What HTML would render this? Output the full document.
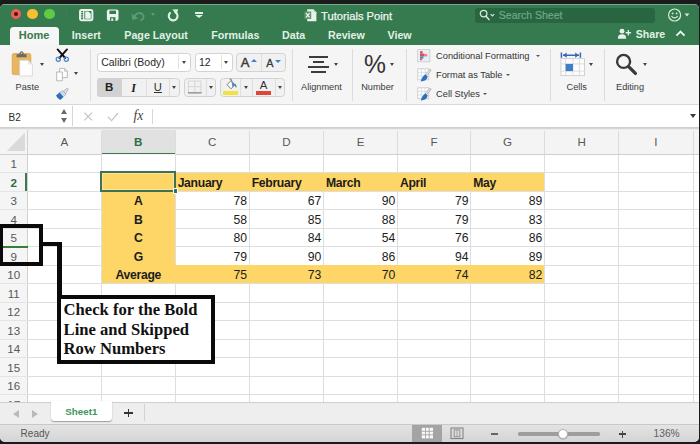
<!DOCTYPE html><html><head><meta charset="utf-8"><title>Tutorials Point</title><style>
html,body{margin:0;padding:0}
body{width:700px;height:444px;overflow:hidden;background:#1b1b1b;position:relative;font-family:"Liberation Sans",sans-serif;}
#win{position:absolute;left:0;top:3.5px;width:699px;height:438.5px;border-radius:5px;overflow:hidden;background:#f3f3f3}
#c{position:absolute;left:0;top:-3.5px;width:700px;height:444px}
.a{position:absolute}
.t{position:absolute;white-space:nowrap;line-height:1}
.tab{color:#e2f0e5;font-weight:bold;font-size:10.7px;top:30.1px}
.lbl{color:#3a3a3a;font-size:9.2px;top:82.5px}
.sep{position:absolute;width:1px;background:#dcdcdc;top:49px;height:52px}
.box{position:absolute;box-sizing:border-box;border:1px solid #d2d2d2;border-radius:3.5px;background:#f1f1f1}
.arr{position:absolute;width:0;height:0;border-left:2.5px solid transparent;border-right:2.5px solid transparent;border-top:3.2px solid #444;margin-left:0.1px}
.hl{position:absolute;left:0;width:699px;height:1px;background:#dedede}
.vl{position:absolute;top:154px;width:1px;height:248px;background:#dedede}
.rn{position:absolute;left:0;width:27.5px;text-align:center;font-size:11.6px;color:#585858;line-height:1}
.cn{position:absolute;top:135.5px;text-align:center;font-size:11.6px;color:#585858;line-height:1}
.cell{position:absolute;font-size:12.2px;color:#1c1c1c;line-height:1;white-space:nowrap}
.num{text-align:right}
.b{font-weight:bold;letter-spacing:-0.3px}
</style></head><body><div id="win"><div id="c">
<div class="a" style="left:0;top:0;width:700px;height:45px;background:#357b4f"></div>
<div class="a" style="left:0;top:3.5px;width:700px;height:1.4px;background:#74a98b"></div>
<div class="a" style="left:10.6px;top:8.6px;width:10.8px;height:10.8px;border-radius:50%;background:#ec5f57"></div>
<div class="a" style="left:14.2px;top:12.2px;width:3.6px;height:3.6px;border-radius:50%;background:#5a0e0c"></div>
<div class="a" style="left:27.4px;top:8.6px;width:10.8px;height:10.8px;border-radius:50%;background:#f6be30"></div>
<div class="a" style="left:44.3px;top:8.6px;width:10.8px;height:10.8px;border-radius:50%;background:#5fcb43"></div>
<div class="a" style="left:66px;top:8px;width:1px;height:13px;background:#3d7d55"></div>
<svg class="a" style="left:78px;top:8px" width="17" height="15" viewBox="0 0 17 15">
<rect x="2" y="2" width="12.4" height="10.2" rx="1.6" fill="none" stroke="#eaf3ec" stroke-width="1.9"/>
<line x1="5.7" y1="2" x2="5.7" y2="12.4" stroke="#eaf3ec" stroke-width="1.3"/>
<path d="M7.2 3.6 H10.6 L12.8 5.8 V10.8 H7.2 Z" fill="#eaf3ec"/>
<rect x="2.8" y="4" width="1.8" height="1" fill="#eaf3ec"/><rect x="2.8" y="6.3" width="1.8" height="1" fill="#eaf3ec"/><rect x="2.8" y="8.6" width="1.8" height="1" fill="#eaf3ec"/>
</svg>
<svg class="a" style="left:105px;top:8px" width="16" height="15" viewBox="0 0 16 15">
<rect x="1.9" y="1.4" width="11.6" height="11.4" rx="1.8" fill="#eaf3ec"/>
<rect x="4.4" y="2.6" width="6.6" height="3.4" fill="#357b4f"/>
<rect x="5" y="9.2" width="5.4" height="3.6" fill="#357b4f"/>
<rect x="6.2" y="10.4" width="2" height="2.4" fill="#eaf3ec"/>
</svg>
<svg class="a" style="left:130px;top:9px" width="17" height="14" viewBox="0 0 17 14">
<path d="M4.2 8.4 C5.4 4.4 9.4 3 12 4.8 C14.6 6.6 13.8 10.2 11 11.2" fill="none" stroke="#5b9b75" stroke-width="1.9" stroke-linecap="round"/>
<path d="M1.6 4.4 L2.2 11 L8.6 9.4 Z" fill="#5b9b75"/>
</svg>
<div class="arr" style="left:150.6px;top:13px;border-top-color:#5b9b75"></div>
<svg class="a" style="left:166px;top:8px" width="15" height="15" viewBox="0 0 15 15">
<path d="M9.4 4.2 A4.4 4.4 0 1 1 4 4.9" fill="none" stroke="#e2efe5" stroke-width="2.1" stroke-linecap="round"/>
<path d="M6.4 1.4 L12.2 1.2 L10.4 6.8 Z" fill="#e2efe5"/>
</svg>
<div class="a" style="left:195.3px;top:12px;width:8px;height:1.5px;background:#e2efe5"></div>
<div class="arr" style="left:195.3px;top:14.6px;border-left-width:4px;border-right-width:4px;border-top:3.5px solid #e2efe5"></div>
<svg class="a" style="left:304px;top:8px" width="14" height="15" viewBox="0 0 14 15">
<path d="M3.2 1.2 H9.4 L12.4 4.2 V13.2 H3.2 Z" fill="#e9f1ea"/>
<path d="M9.4 1.2 V4.2 H12.4 Z" fill="#b9d3c0"/>
<rect x="0.4" y="3.4" width="6.8" height="7.6" fill="#5d9873"/>
<path d="M2 5.2 L5.6 9.4 M5.6 5.2 L2 9.4" stroke="#f2f7f3" stroke-width="1.2"/>
</svg>
<div class="t" style="left:321px;top:11.3px;font-size:11.2px;color:#eef5ef;-webkit-text-stroke:0.25px #eef5ef">Tutorials Point</div>
<div class="a" style="left:475px;top:7.5px;width:179.5px;height:15.5px;border-radius:3px;background:#296540"></div>
<svg class="a" style="left:478px;top:8px" width="20" height="14" viewBox="0 0 20 14">
<circle cx="5.6" cy="5.6" r="3.3" fill="none" stroke="#d6e8da" stroke-width="1.3"/>
<line x1="8" y1="8.2" x2="11" y2="11.6" stroke="#d6e8da" stroke-width="1.5" stroke-linecap="round"/>
<path d="M12.6 6.2 L14.4 8 L16.2 6.2" fill="none" stroke="#d6e8da" stroke-width="1.2"/>
</svg>
<div class="t" style="left:498.8px;top:10.4px;font-size:10.5px;color:#6dab84;-webkit-text-stroke:0.2px #6dab84">Search Sheet</div>
<svg class="a" style="left:666px;top:7px" width="26" height="16" viewBox="0 0 26 16">
<circle cx="8.6" cy="8" r="6" fill="none" stroke="#dcebdf" stroke-width="1.2"/>
<circle cx="6.6" cy="6.4" r="0.9" fill="#dcebdf"/><circle cx="10.6" cy="6.4" r="0.9" fill="#dcebdf"/>
<path d="M5.4 9.2 Q8.6 12.6 11.8 9.2" fill="none" stroke="#dcebdf" stroke-width="1.1"/>
<path d="M18.6 6.6 H23.4 L21 9.6 Z" fill="#dcebdf"/>
</svg>
<div class="a" style="left:9.5px;top:27px;width:49.5px;height:19px;border-radius:3.5px 3.5px 0 0;background:#f6f6f6"></div>
<div class="t" style="left:18.8px;top:30.3px;font-size:11px;font-weight:bold;color:#37784e">Home</div>
<div class="t tab" style="left:71.8px">Insert</div>
<div class="t tab" style="left:124.3px">Page Layout</div>
<div class="t tab" style="left:211.3px">Formulas</div>
<div class="t tab" style="left:282px">Data</div>
<div class="t tab" style="left:328px">Review</div>
<div class="t tab" style="left:387.5px">View</div>
<svg class="a" style="left:616.6px;top:27px" width="15.3" height="13.5" viewBox="0 0 17 15">
<circle cx="5.6" cy="4.6" r="2.7" fill="#e8f2ea"/>
<path d="M1 13 C1 8.6 3.4 8 5.6 8 C7.8 8 10.2 8.6 10.2 13 Z" fill="#e8f2ea"/>
<path d="M12.6 3.4 V9.4 M9.6 6.4 H15.6" stroke="#e8f2ea" stroke-width="1.5"/>
</svg>
<div class="t" style="left:635.8px;top:29px;font-size:10.6px;font-weight:bold;color:#e2f0e5">Share</div>
<svg class="a" style="left:674px;top:28px" width="13" height="11" viewBox="0 0 13 11">
<path d="M2.4 7.6 L6.5 3.6 L10.6 7.6" fill="none" stroke="#eef5ef" stroke-width="1.9"/>
</svg>
<div class="a" style="left:0;top:45px;width:700px;height:59px;background:#f5f5f5"></div>
<div class="a" style="left:0;top:103.5px;width:700px;height:1px;background:#d9d9d9"></div>
<svg class="a" style="left:10px;top:49px" width="26" height="29" viewBox="0 0 26 29">
<rect x="2.2" y="4.6" width="18.6" height="21" rx="1.6" fill="#e9b65f"/>
<rect x="2.2" y="4.6" width="18.6" height="21" rx="1.6" fill="none" stroke="#d9a249" stroke-width="0.8"/>
<path d="M6.6 8.2 V5.2 H9.4 C9.4 1.4 13.8 1.4 13.8 5.2 H16.6 V8.2 Z" fill="#6a6a6a"/>
<circle cx="11.6" cy="4.2" r="0.9" fill="#e9b65f"/>
<path d="M9.6 11.2 H18.2 L22.4 15.4 V27 H9.6 Z" fill="#fdfdfd" stroke="#cfcfcf" stroke-width="0.7"/>
<path d="M18.2 11.2 V15.4 H22.4 Z" fill="#e4e4e4"/>
</svg>
<div class="arr" style="left:39.6px;top:62.6px"></div>
<div class="t lbl" style="left:15.6px">Paste</div>
<svg class="a" style="left:55px;top:48px" width="15" height="15" viewBox="0 0 15 15">
<path d="M2.6 1.4 L10.2 10 M12 1.4 L4.4 10" stroke="#111" stroke-width="1.9" stroke-linecap="round"/>
<circle cx="3.3" cy="11.3" r="2.1" fill="none" stroke="#4e86c9" stroke-width="1.3"/>
<circle cx="11.3" cy="11.3" r="2.1" fill="none" stroke="#4e86c9" stroke-width="1.3"/>
</svg>
<svg class="a" style="left:55px;top:67px" width="15" height="16" viewBox="0 0 15 16">
<path d="M4.6 1.4 H9.6 L12.4 4.2 V10.6 H4.6 Z" fill="#fcfcfc" stroke="#b4b4b4" stroke-width="0.9"/>
<path d="M1.6 5 H7.4 V13.8 H1.6 Z" fill="#fcfcfc" stroke="#b4b4b4" stroke-width="0.9"/>
<path d="M9.6 1.4 V4.2 H12.4" fill="none" stroke="#b4b4b4" stroke-width="0.8"/>
</svg>
<div class="arr" style="left:74.2px;top:72.4px"></div>
<svg class="a" style="left:55px;top:87px" width="15" height="14" viewBox="0 0 15 14">
<path d="M8.2 4.6 L11.4 1.6 Q12.8 0.8 13.2 2.2 L10.6 6.6 Z" fill="#e6e6e6" stroke="#9a9a9a" stroke-width="0.7"/>
<path d="M4.4 5.4 L8 3.6 L11 7.4 L8.2 10 Z" fill="#c9d9ee" stroke="#8aa6cc" stroke-width="0.6"/>
<path d="M1 8.6 L4.6 5.6 L8.4 10 L5.4 13 Q2.4 12 1 8.6 Z" fill="#2f6fb7"/>
</svg>
<div class="sep" style="left:90px"></div>
<div class="box" style="left:96.5px;top:52.5px;width:94.5px;height:19px;background:#fff"></div>
<div class="a" style="left:178px;top:55px;width:1px;height:14px;background:#e2e2e2"></div>
<div class="t" style="left:101.2px;top:57px;font-size:10.5px;color:#2a2a2a">Calibri (Body)</div>
<div class="arr" style="left:181.8px;top:60.6px"></div>
<div class="box" style="left:194.5px;top:52.5px;width:38px;height:19px;background:#fff"></div>
<div class="a" style="left:220.5px;top:55px;width:1px;height:14px;background:#e2e2e2"></div>
<div class="t" style="left:199px;top:57px;font-size:10.5px;color:#2a2a2a">12</div>
<div class="arr" style="left:223.7px;top:60.6px"></div>
<div class="box" style="left:236px;top:52.5px;width:49.5px;height:19px"></div>
<div class="a" style="left:260.5px;top:53.5px;width:1px;height:17px;background:#dedede"></div>
<div class="t" style="left:240.8px;top:56px;font-size:13px;color:#3a3a3a;-webkit-text-stroke:0.45px #3a3a3a">A</div>
<div class="a" style="left:251px;top:59.4px;width:0;height:0;border-left:3.3px solid transparent;border-right:3.3px solid transparent;border-bottom:3.4px solid #3f7fc8"></div>
<div class="t" style="left:266.2px;top:57.6px;font-size:10.8px;color:#3a3a3a;-webkit-text-stroke:0.3px #3a3a3a">A</div>
<div class="a" style="left:274.6px;top:60.4px;width:0;height:0;border-left:3.3px solid transparent;border-right:3.3px solid transparent;border-top:3.4px solid #3f7fc8"></div>
<div class="box" style="left:96.5px;top:77.5px;width:83.5px;height:19.5px"></div>
<div class="a" style="left:97px;top:78px;width:24.5px;height:18.5px;border-radius:3px 0 0 3px;background:#d2d2d2"></div>
<div class="a" style="left:145.5px;top:78.5px;width:1px;height:17.5px;background:#dedede"></div>
<div class="a" style="left:169px;top:78.5px;width:1px;height:17.5px;background:#dedede"></div>
<div class="t" style="left:105px;top:82.4px;font-size:11.5px;font-weight:bold;color:#222">B</div>
<div class="t" style="left:131.2px;top:81.6px;font-size:12px;font-style:italic;font-family:'Liberation Serif',serif;color:#222;font-weight:bold">I</div>
<div class="t" style="left:153.8px;top:82.2px;font-size:11.2px;color:#333">U</div>
<div class="a" style="left:153.6px;top:92.4px;width:8.6px;height:1px;background:#333"></div>
<div class="arr" style="left:171.7px;top:86px"></div>
<div class="box" style="left:183.7px;top:77.5px;width:32.5px;height:19.5px"></div>
<div class="a" style="left:205.8px;top:78.5px;width:1px;height:17.5px;background:#dedede"></div>
<svg class="a" style="left:187px;top:80px" width="16" height="15" viewBox="0 0 16 15">
<path d="M1.5 1 V12.5 M7.8 1 V12.5 M14 1 V12.5 M1.5 1 H14 M1.5 6.6 H14" stroke="#d4d4d4" stroke-width="0.9" fill="none"/>
<path d="M1 12.9 H14.6" stroke="#6a6a6a" stroke-width="1"/>
</svg>
<div class="arr" style="left:208.7px;top:86px"></div>
<div class="box" style="left:220.3px;top:77.5px;width:65.2px;height:19.5px"></div>
<div class="a" style="left:240.4px;top:78.5px;width:1px;height:17.5px;background:#dedede"></div>
<div class="a" style="left:251.7px;top:78.5px;width:1px;height:17.5px;background:#dedede"></div>
<div class="a" style="left:275px;top:78.5px;width:1px;height:17.5px;background:#dedede"></div>
<svg class="a" style="left:222px;top:78px" width="17" height="13" viewBox="0 0 17 13">
<path d="M5 6.6 L9 2.6 L13 6.8 L9 10.8 Z" fill="#fbfbfb" stroke="#6b6b6b" stroke-width="0.9"/>
<path d="M7.6 1 Q9.6 0.4 10 3.4" fill="none" stroke="#6b6b6b" stroke-width="0.9"/>
<path d="M12.8 5.6 Q15.4 7.6 14 10 Q12.6 8.4 12.8 5.6 Z" fill="#3f7fc8"/>
<path d="M9.4 3.4 L13 6.8 L10.6 9.2 Z" fill="#4b86cf"/>
</svg>
<div class="a" style="left:222.9px;top:90.6px;width:14.7px;height:4px;background:#f4e23c"></div>
<div class="arr" style="left:244px;top:86px"></div>
<div class="t" style="left:259.8px;top:79.8px;font-size:11.4px;color:#333">A</div>
<div class="a" style="left:256.3px;top:90.6px;width:15.1px;height:4px;background:#e0453a"></div>
<div class="arr" style="left:277.7px;top:86px"></div>
<div class="sep" style="left:292px"></div>
<div class="a" style="left:309.3px;top:56.3px;width:18.4px;height:1.7px;background:#3c3c3c"></div>
<div class="a" style="left:312.7px;top:61.2px;width:11.4px;height:1.7px;background:#3c3c3c"></div>
<div class="a" style="left:307.9px;top:66.1px;width:21.4px;height:1.7px;background:#3c3c3c"></div>
<div class="a" style="left:310.9px;top:71.3px;width:15.2px;height:1.7px;background:#3c3c3c"></div>
<div class="arr" style="left:334px;top:62.6px"></div>
<div class="t lbl" style="left:301px">Alignment</div>
<div class="sep" style="left:352px"></div>
<div class="t" style="left:364px;top:51.2px;font-size:26px;color:#333;transform:scaleX(0.95);transform-origin:0 0">%</div>
<div class="arr" style="left:390px;top:63.3px"></div>
<div class="t lbl" style="left:361.2px">Number</div>
<div class="sep" style="left:405.5px"></div>
<svg class="a" style="left:417px;top:49px" width="14" height="14" viewBox="0 0 14 14">
<rect x="0.8" y="0.8" width="12" height="12" fill="#fdfdfd" stroke="#bdbdbd" stroke-width="0.8"/>
<rect x="1.4" y="1.4" width="10.8" height="10.8" fill="#e6eef8"/>
<rect x="3" y="2.2" width="2.6" height="2.4" fill="#d9534a"/><rect x="3" y="4.6" width="4.6" height="2.8" fill="#d9534a"/><rect x="7.6" y="5.2" width="2.6" height="2.2" fill="#e4807a"/>
<rect x="3" y="7.4" width="3.4" height="2.2" fill="#4a86cf"/><rect x="3" y="9.6" width="2" height="1.6" fill="#d9534a"/>
</svg>
<svg class="a" style="left:417px;top:68px" width="15" height="15" viewBox="0 0 15 15">
<rect x="0.8" y="0.8" width="11" height="11" fill="#fdfdfd" stroke="#c6c6c6" stroke-width="0.8"/>
<path d="M0.8 4.4 H11.8 M0.8 8 H11.8 M4.4 0.8 V11.8 M8 0.8 V11.8" stroke="#cfdaea" stroke-width="0.8"/>
<path d="M9 5.6 L12.8 1.4 Q14.2 1.2 13.8 2.8 L10.4 7 Z" fill="#e3e3e3" stroke="#9a9a9a" stroke-width="0.6"/>
<path d="M3.8 13.6 Q4.6 9 8.4 6.2 L10.8 8.6 Q9.6 13.4 3.8 13.6 Z" fill="#2f6fb7"/>
</svg>
<svg class="a" style="left:417px;top:87px" width="15" height="15" viewBox="0 0 15 15">
<rect x="0.8" y="0.8" width="11" height="11" fill="#fdfdfd" stroke="#c6c6c6" stroke-width="0.8"/>
<path d="M0.8 4.4 H11.8 M0.8 8 H11.8 M4.4 0.8 V11.8 M8 0.8 V11.8" stroke="#cfdaea" stroke-width="0.8"/>
<path d="M9 5.6 L12.8 1.4 Q14.2 1.2 13.8 2.8 L10.4 7 Z" fill="#e3e3e3" stroke="#9a9a9a" stroke-width="0.6"/>
<path d="M3.8 13.6 Q4.6 9 8.4 6.2 L10.8 8.6 Q9.6 13.4 3.8 13.6 Z" fill="#2f6fb7"/>
</svg>
<div class="t" style="left:436px;top:51.6px;font-size:9.3px;color:#333">Conditional Formatting</div>
<div class="arr" style="left:535.6px;top:55.0px;border-left-width:2.1px;border-right-width:2.1px;border-top:2.8px solid #555"></div>
<div class="t" style="left:436px;top:70.6px;font-size:9.3px;color:#333">Format as Table</div>
<div class="arr" style="left:505.6px;top:74.0px;border-left-width:2.1px;border-right-width:2.1px;border-top:2.8px solid #555"></div>
<div class="t" style="left:436px;top:89.6px;font-size:9.3px;color:#333">Cell Styles</div>
<div class="arr" style="left:483px;top:93.0px;border-left-width:2.1px;border-right-width:2.1px;border-top:2.8px solid #555"></div>
<div class="sep" style="left:550px"></div>
<svg class="a" style="left:559px;top:50px" width="28" height="27" viewBox="0 0 28 27">
<path d="M2.4 2.6 V7.8 M21.4 2.6 V7.8 M4 5.2 H20" stroke="#3568b4" stroke-width="1.5" fill="none"/>
<path d="M4 5.2 L7.6 2.6 V7.8 Z M19.8 5.2 L16.2 2.6 V7.8 Z" fill="#3568b4"/>
<rect x="1.9" y="8.6" width="23.6" height="17" fill="#fcfcfc" stroke="#cdcdcd" stroke-width="0.9"/>
<path d="M1.9 13.9 H25.5 M1.9 21.1 H25.5 M6.6 8.6 V25.6 M14 8.6 V25.6 M20.4 8.6 V25.6" stroke="#d8d8d8" stroke-width="0.8"/>
<rect x="6.6" y="13.9" width="7.4" height="7.2" fill="#3f7fc8"/>
</svg>
<div class="arr" style="left:589px;top:63.3px"></div>
<div class="t lbl" style="left:566.5px">Cells</div>
<div class="sep" style="left:604px"></div>
<svg class="a" style="left:613px;top:51px" width="28" height="26" viewBox="0 0 28 26">
<circle cx="10.6" cy="10.4" r="6.5" fill="none" stroke="#3a3a3a" stroke-width="2.4"/>
<line x1="15.6" y1="15.6" x2="22.4" y2="22.4" stroke="#3a3a3a" stroke-width="3.3" stroke-linecap="round"/>
</svg>
<div class="arr" style="left:642.6px;top:63.3px"></div>
<div class="t lbl" style="left:616px">Editing</div>
<div class="a" style="left:0;top:104.5px;width:700px;height:22.5px;background:#fff"></div>
<div class="a" style="left:0;top:126.8px;width:700px;height:3.4px;background:linear-gradient(#cdcdcd,#d0d0d0 40%,#eaeaea 78%,#f3f3f3)"></div>
<div class="t" style="left:8.6px;top:112.6px;font-size:10px;color:#2c2c2c">B2</div>
<div class="a" style="left:61.1px;top:108.6px;width:0;height:0;border-left:3.3px solid transparent;border-right:3.3px solid transparent;border-bottom:5px solid #6a6a6a"></div>
<div class="a" style="left:61.1px;top:118.4px;width:0;height:0;border-left:3.3px solid transparent;border-right:3.3px solid transparent;border-top:5px solid #6a6a6a"></div>
<div class="a" style="left:71.5px;top:106px;width:1px;height:20px;background:#d6d6d6"></div>
<svg class="a" style="left:82px;top:110px" width="40" height="14" viewBox="0 0 40 14">
<path d="M2.4 2.6 L10 10.4 M10 2.6 L2.4 10.4" stroke="#c4c4c4" stroke-width="1.2" fill="none"/>
<path d="M26 7 L29.6 10.6 L36 3" stroke="#c4c4c4" stroke-width="1.2" fill="none"/>
</svg>
<div class="t" style="left:133.4px;top:108.6px;font-size:13.6px;font-style:italic;font-family:'Liberation Serif',serif;color:#444">fx</div>
<div class="a" style="left:151.5px;top:109px;width:1px;height:15px;background:#d6d6d6"></div>
<div class="arr" style="left:689.8px;top:114.4px;border-left-width:3px;border-right-width:3px;border-top:4.4px solid #3c3c3c"></div>
<div class="a" style="left:0;top:130px;width:700px;height:24px;background:#f4f4f4"></div>
<div class="a" style="left:0;top:154px;width:27.5px;height:248px;background:#f5f5f5"></div>
<div class="a" style="left:101.5px;top:130px;width:74px;height:24px;background:#e1e1e1"></div>
<div class="a" style="left:101.5px;top:152.6px;width:74px;height:1.6px;background:#3c7a4f"></div>
<svg class="a" style="left:5px;top:131px" width="22" height="22" viewBox="0 0 22 22"><path d="M20 1.6 V20 H1.8 Z" fill="#dadada"/></svg>
<div class="a" style="left:28px;top:154.5px;width:671px;height:247.5px;background:#fff"></div>
<div class="a" style="left:101.5px;top:172px;width:443px;height:19px;background:#fdd667"></div>
<div class="a" style="left:101.5px;top:191px;width:74px;height:74px;background:#fdd667"></div>
<div class="a" style="left:101.5px;top:265px;width:443px;height:18.8px;background:#fdd667"></div>
<div class="hl" style="top:172.0px"></div>
<div class="hl" style="top:190.5px"></div>
<div class="hl" style="top:209.0px"></div>
<div class="hl" style="top:227.5px"></div>
<div class="hl" style="top:246.0px"></div>
<div class="hl" style="top:264.5px"></div>
<div class="hl" style="top:283.0px"></div>
<div class="hl" style="top:301.5px"></div>
<div class="hl" style="top:320.0px"></div>
<div class="hl" style="top:338.5px"></div>
<div class="hl" style="top:357.0px"></div>
<div class="hl" style="top:375.5px"></div>
<div class="hl" style="top:394.0px"></div>
<div class="hl" style="top:412.5px"></div>
<div class="vl" style="left:100.75px"></div>
<div class="vl" style="left:174.75px"></div>
<div class="vl" style="left:248.75px"></div>
<div class="vl" style="left:323.0px"></div>
<div class="vl" style="left:397.0px"></div>
<div class="vl" style="left:470.25px"></div>
<div class="vl" style="left:544.0px"></div>
<div class="vl" style="left:618.25px"></div>
<div class="vl" style="left:692.5px"></div>
<div class="a" style="left:101.8px;top:172.6px;width:442.4px;height:18px;background:#fdd667"></div>
<div class="a" style="left:101.8px;top:190px;width:73.2px;height:76px;background:#fdd667"></div>
<div class="a" style="left:101.8px;top:265.4px;width:442.4px;height:18px;background:#fdd667"></div>
<div class="a" style="left:27px;top:130px;width:1px;height:272px;background:#d0d0d0"></div>
<div class="a" style="left:0;top:153.5px;width:101.5px;height:1px;background:#d0d0d0"></div>
<div class="a" style="left:175.5px;top:153.5px;width:524px;height:1px;background:#d0d0d0"></div>
<div class="a" style="left:100.75px;top:131px;width:1px;height:23px;background:#dcdcdc"></div>
<div class="a" style="left:174.75px;top:131px;width:1px;height:23px;background:#dcdcdc"></div>
<div class="a" style="left:248.75px;top:131px;width:1px;height:23px;background:#dcdcdc"></div>
<div class="a" style="left:323.0px;top:131px;width:1px;height:23px;background:#dcdcdc"></div>
<div class="a" style="left:397.0px;top:131px;width:1px;height:23px;background:#dcdcdc"></div>
<div class="a" style="left:470.25px;top:131px;width:1px;height:23px;background:#dcdcdc"></div>
<div class="a" style="left:544.0px;top:131px;width:1px;height:23px;background:#dcdcdc"></div>
<div class="a" style="left:618.25px;top:131px;width:1px;height:23px;background:#dcdcdc"></div>
<div class="a" style="left:692.5px;top:131px;width:1px;height:23px;background:#dcdcdc"></div>
<div class="a" style="left:0;top:172.0px;width:27.5px;height:1px;background:#e4e4e4"></div>
<div class="a" style="left:0;top:190.5px;width:27.5px;height:1px;background:#e4e4e4"></div>
<div class="a" style="left:0;top:209.0px;width:27.5px;height:1px;background:#e4e4e4"></div>
<div class="a" style="left:0;top:227.5px;width:27.5px;height:1px;background:#e4e4e4"></div>
<div class="a" style="left:0;top:246.0px;width:27.5px;height:1px;background:#e4e4e4"></div>
<div class="a" style="left:0;top:264.5px;width:27.5px;height:1px;background:#e4e4e4"></div>
<div class="a" style="left:0;top:283.0px;width:27.5px;height:1px;background:#e4e4e4"></div>
<div class="a" style="left:0;top:301.5px;width:27.5px;height:1px;background:#e4e4e4"></div>
<div class="a" style="left:0;top:320.0px;width:27.5px;height:1px;background:#e4e4e4"></div>
<div class="a" style="left:0;top:338.5px;width:27.5px;height:1px;background:#e4e4e4"></div>
<div class="a" style="left:0;top:357.0px;width:27.5px;height:1px;background:#e4e4e4"></div>
<div class="a" style="left:0;top:375.5px;width:27.5px;height:1px;background:#e4e4e4"></div>
<div class="a" style="left:0;top:394.0px;width:27.5px;height:1px;background:#e4e4e4"></div>
<div class="a" style="left:0;top:412.5px;width:27.5px;height:1px;background:#e4e4e4"></div>
<div class="cn" style="left:27.5px;width:73.75px">A</div>
<div class="cn" style="left:101.25px;width:74.0px;color:#2e6e43;font-weight:bold">B</div>
<div class="cn" style="left:175.25px;width:74.0px">C</div>
<div class="cn" style="left:249.25px;width:74.25px">D</div>
<div class="cn" style="left:323.5px;width:74.0px">E</div>
<div class="cn" style="left:397.5px;width:73.25px">F</div>
<div class="cn" style="left:470.75px;width:73.75px">G</div>
<div class="cn" style="left:544.5px;width:74.25px">H</div>
<div class="cn" style="left:618.75px;width:74.25px">I</div>
<div class="rn" style="top:158.4px">1</div>
<div class="rn" style="top:176.9px;color:#2e6e43;font-weight:bold">2</div>
<div class="rn" style="top:195.4px">3</div>
<div class="rn" style="top:213.9px">4</div>
<div class="rn" style="top:232.4px">5</div>
<div class="rn" style="top:250.9px">9</div>
<div class="rn" style="top:269.4px">10</div>
<div class="rn" style="top:287.9px">11</div>
<div class="rn" style="top:306.4px">12</div>
<div class="rn" style="top:324.9px">13</div>
<div class="rn" style="top:343.4px">14</div>
<div class="rn" style="top:361.9px">15</div>
<div class="rn" style="top:380.4px">16</div>
<div class="rn" style="top:398.9px">17</div>
<div class="a" style="left:25.4px;top:172.5px;width:2px;height:18.5px;background:#3c7a4f"></div>
<div class="a" style="left:0;top:245.5px;width:27.5px;height:2px;background:#3a7d3a"></div>
<div class="cell b" style="left:177.65px;top:176.7px">January</div>
<div class="cell b" style="left:251.65px;top:176.7px">February</div>
<div class="cell b" style="left:325.9px;top:176.7px">March</div>
<div class="cell b" style="left:399.9px;top:176.7px">April</div>
<div class="cell b" style="left:473.15px;top:176.7px">May</div>
<div class="cell b" style="left:101.25px;width:74.0px;top:195.2px;text-align:center">A</div>
<div class="cell b" style="left:101.25px;width:74.0px;top:213.7px;text-align:center">B</div>
<div class="cell b" style="left:101.25px;width:74.0px;top:232.2px;text-align:center">C</div>
<div class="cell b" style="left:101.25px;width:74.0px;top:250.7px;text-align:center">G</div>
<div class="cell b" style="left:101.25px;width:74.0px;top:269.2px;text-align:center">Average</div>
<div class="cell" style="left:175.25px;width:71.8px;top:195.2px;text-align:right">78</div>
<div class="cell" style="left:249.25px;width:72.05px;top:195.2px;text-align:right">67</div>
<div class="cell" style="left:323.5px;width:71.8px;top:195.2px;text-align:right">90</div>
<div class="cell" style="left:397.5px;width:71.05px;top:195.2px;text-align:right">79</div>
<div class="cell" style="left:470.75px;width:71.55px;top:195.2px;text-align:right">89</div>
<div class="cell" style="left:175.25px;width:71.8px;top:213.7px;text-align:right">58</div>
<div class="cell" style="left:249.25px;width:72.05px;top:213.7px;text-align:right">85</div>
<div class="cell" style="left:323.5px;width:71.8px;top:213.7px;text-align:right">88</div>
<div class="cell" style="left:397.5px;width:71.05px;top:213.7px;text-align:right">79</div>
<div class="cell" style="left:470.75px;width:71.55px;top:213.7px;text-align:right">83</div>
<div class="cell" style="left:175.25px;width:71.8px;top:232.2px;text-align:right">80</div>
<div class="cell" style="left:249.25px;width:72.05px;top:232.2px;text-align:right">84</div>
<div class="cell" style="left:323.5px;width:71.8px;top:232.2px;text-align:right">54</div>
<div class="cell" style="left:397.5px;width:71.05px;top:232.2px;text-align:right">76</div>
<div class="cell" style="left:470.75px;width:71.55px;top:232.2px;text-align:right">86</div>
<div class="cell" style="left:175.25px;width:71.8px;top:250.7px;text-align:right">79</div>
<div class="cell" style="left:249.25px;width:72.05px;top:250.7px;text-align:right">90</div>
<div class="cell" style="left:323.5px;width:71.8px;top:250.7px;text-align:right">86</div>
<div class="cell" style="left:397.5px;width:71.05px;top:250.7px;text-align:right">94</div>
<div class="cell" style="left:470.75px;width:71.55px;top:250.7px;text-align:right">89</div>
<div class="cell" style="left:175.25px;width:71.8px;top:269.2px;text-align:right">75</div>
<div class="cell" style="left:249.25px;width:72.05px;top:269.2px;text-align:right">73</div>
<div class="cell" style="left:323.5px;width:71.8px;top:269.2px;text-align:right">70</div>
<div class="cell" style="left:397.5px;width:71.05px;top:269.2px;text-align:right">74</div>
<div class="cell" style="left:470.75px;width:71.55px;top:269.2px;text-align:right">82</div>
<div class="a" style="left:100.2px;top:170.8px;width:76.2px;height:21.2px;box-sizing:border-box;border:2px solid #3f7152;box-shadow:inset 0 0 0 0.7px rgba(255,255,255,0.45)"></div>
<div class="a" style="left:172.6px;top:188.4px;width:5.6px;height:5.4px;background:#37724c;border:0.8px solid #fff;box-sizing:border-box"></div>
<div class="a" style="left:0;top:224.2px;width:43px;height:42.3px;box-sizing:border-box;border:4.2px solid #0a0a0a;border-left-width:3.4px"></div>
<div class="a" style="left:43px;top:241.8px;width:18.6px;height:4.4px;background:#0a0a0a"></div>
<div class="a" style="left:57.3px;top:241.8px;width:4.3px;height:56px;background:#0a0a0a"></div>
<div class="a" style="left:57.4px;top:295px;width:157.8px;height:68.7px;box-sizing:border-box;border:4.2px solid #0a0a0a;background:#fff"></div>
<div class="t" style="left:63.6px;top:302.1px;font-family:'Liberation Serif',serif;font-weight:bold;font-size:16.6px;color:#111">Check for the Bold</div>
<div class="t" style="left:63.6px;top:321.70000000000005px;font-family:'Liberation Serif',serif;font-weight:bold;font-size:16.6px;color:#111">Line and Skipped</div>
<div class="t" style="left:63.6px;top:341.3px;font-family:'Liberation Serif',serif;font-weight:bold;font-size:16.6px;color:#111">Row Numbers</div>
<div class="a" style="left:0;top:402px;width:700px;height:22px;background:#eeeeee"></div>
<div class="a" style="left:0;top:401.6px;width:700px;height:1px;background:#cfcfcf"></div>
<div class="a" style="left:50.6px;top:400.8px;width:61.6px;height:20.2px;background:#fff;border-radius:0 0 3.5px 3.5px;box-shadow:0 0.6px 1.2px rgba(0,0,0,0.35);clip-path:inset(0 -3px -3px -3px)"></div>
<div class="t" style="left:50.6px;width:61.6px;text-align:center;top:407.2px;font-size:9.8px;font-weight:bold;color:#41935b">Sheet1</div>
<div class="a" style="left:12.6px;top:409.6px;width:0;height:0;border-top:4px solid transparent;border-bottom:4px solid transparent;border-right:6.2px solid #b9b9b9"></div>
<div class="a" style="left:32.2px;top:409.6px;width:0;height:0;border-top:4px solid transparent;border-bottom:4px solid transparent;border-left:6.2px solid #b9b9b9"></div>
<div class="a" style="left:124.4px;top:411.9px;width:8.4px;height:1.8px;background:#333"></div>
<div class="a" style="left:127.7px;top:408.6px;width:1.8px;height:8.4px;background:#333"></div>
<div class="a" style="left:144px;top:404px;width:1px;height:17px;background:#d2d2d2"></div>
<div class="a" style="left:0;top:424px;width:700px;height:20px;background:linear-gradient(#e4e4e4,#d3d3d3)"></div>
<div class="a" style="left:0;top:423.5px;width:700px;height:1px;background:#c8c8c8"></div>
<div class="t" style="left:20.6px;top:428.8px;font-size:10px;color:#555">Ready</div>
<div class="a" style="left:412px;top:424.5px;width:30.4px;height:18px;background:#a4a4a4"></div>
<svg class="a" style="left:421px;top:427px" width="13" height="13" viewBox="0 0 13 13">
<rect x="0.8" y="0.8" width="11.2" height="10.6" fill="#fafafa"/>
<path d="M0.8 4.3 H12 M0.8 7.8 H12 M4.5 0.8 V11.4 M8.2 0.8 V11.4" stroke="#a4a4a4" stroke-width="0.9"/>
</svg>
<svg class="a" style="left:450px;top:427px" width="14" height="13" viewBox="0 0 14 13">
<rect x="1" y="1" width="12" height="10.6" fill="none" stroke="#7c7c7c" stroke-width="1"/>
<rect x="4.2" y="2.8" width="5.6" height="7" fill="none" stroke="#8c8c8c" stroke-width="0.9"/>
<path d="M7 2.8 V9.8" stroke="#8c8c8c" stroke-width="0.7"/>
</svg>
<div class="a" style="left:491.4px;top:433.2px;width:7px;height:1.6px;background:#666"></div>
<div class="a" style="left:517.6px;top:432.4px;width:82.4px;height:3.2px;border-radius:1.6px;background:#9e9e9e"></div>
<div class="a" style="left:557.6px;top:428.6px;width:10.6px;height:10.6px;border-radius:50%;background:#fff;box-sizing:border-box;border:0.8px solid #b4b4b4;box-shadow:0 0.5px 1px rgba(0,0,0,0.3)"></div>
<div class="a" style="left:618.8px;top:433.2px;width:7px;height:1.6px;background:#444"></div>
<div class="a" style="left:621.5px;top:430.5px;width:1.6px;height:7px;background:#444"></div>
<div class="t" style="left:653.6px;top:428.8px;font-size:10.2px;color:#606060">136%</div>
</div></div></body></html>
